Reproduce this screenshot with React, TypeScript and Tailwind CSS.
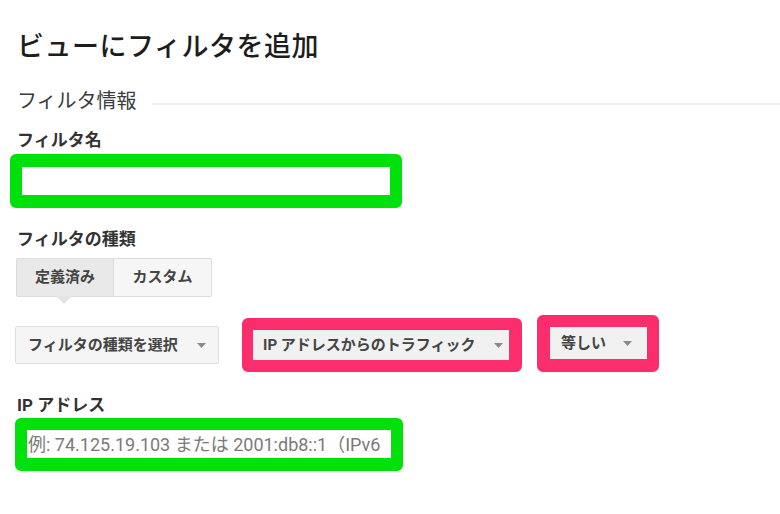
const font = { fontFamily: "Roboto, 'Noto Sans CJK JP', sans-serif" };

function Caret() {
  return (
    <svg className="w-[9px] h-[5px] shrink-0" viewBox="0 0 9 5">
      <path d="M0 0h9L4.5 5z" fill="#8a8a8a" />
    </svg>
  );
}

export default function App() {
  return (
    <div
      className="w-[780px] h-[514px] bg-white overflow-hidden text-[#333] flex flex-col"
      style={font}
    >
      <h1 className="ml-[17px] mt-[31px] text-[27px] leading-[32px] font-medium text-[#1d1d1d] tracking-[0.5px]">
        ビューにフィルタを追加
      </h1>

      <div className="flex items-center mt-[26px]">
        <h2 className="ml-[17px] text-[20px] leading-[24px] text-[#3c3c3c]">フィルタ情報</h2>
        <div className="flex-1 h-[2px] bg-[#efefef] ml-[15px] mt-[6px]" />
      </div>

      <label className="ml-[17px] mt-[17px] text-[17px] leading-[20px] font-bold text-[#333]">
        フィルタ名
      </label>
      <div className="ml-[10px] mt-[4px] w-[392px] border-[#00e00b] border-t-[13px] border-b-[13px] border-x-[12px] rounded-[6px]">
        <div className="h-[28px] bg-white" />
      </div>

      <label className="ml-[17px] mt-[21px] text-[17px] leading-[20px] font-bold text-[#333]">
        フィルタの種類
      </label>
      <div className="ml-[16px] mt-[9px] flex w-[196px] h-[39px] text-[15px] font-bold text-[#444]">
        <div className="relative w-[98px] flex items-center justify-center bg-[#e9e9e9] border border-[#dcdcdc] rounded-l-[2px]">
          定義済み
          <div className="absolute left-[39px] top-full w-0 h-0 border-l-[8px] border-r-[8px] border-t-[8px] border-l-transparent border-r-transparent border-t-[#e4e4e4]" />
        </div>
        <div className="flex-1 flex items-center justify-center bg-[#f6f6f6] border border-l-0 border-[#dcdcdc] rounded-r-[2px]">
          カスタム
        </div>
      </div>

      <div className="flex items-center mt-[21px] text-[15px] font-bold text-[#444]">
        <div className="ml-[15px] w-[204px] h-[38px] flex items-center justify-between pl-[12px] pr-[12px] bg-[#f5f5f5] border border-[#dedede] rounded-[2px]">
          <span>フィルタの種類を選択</span>
          <Caret />
        </div>
        <div className="ml-[23px] w-[280px] border-[#fc2d6c] border-l-[11px] border-r-[13px] border-y-[12px] rounded-[6px]">
          <div className="h-[30px] flex items-center justify-between pl-[10px] pr-[6px] bg-[#f1f1f1]">
            <span>IP アドレスからのトラフィック</span>
            <Caret />
          </div>
        </div>
        <div className="ml-[15px] -mt-[3px] w-[122px] border-[#fc2d6c] border-l-[13px] border-r-[12px] border-t-[12px] border-b-[13px] rounded-[6px]">
          <div className="h-[32px] flex items-center justify-between pl-[11px] pr-[15px] bg-[#f1f1f1]">
            <span>等しい</span>
            <Caret />
          </div>
        </div>
      </div>

      <label className="ml-[17px] mt-[23px] text-[17px] leading-[20px] font-bold text-[#333]">
        IP アドレス
      </label>
      <div className="ml-[15px] mt-[3px] w-[388px] border-[#00e00b] border-t-[12px] border-b-[13px] border-x-[12px] rounded-[6px]">
        <div className="h-[28px] bg-white flex items-center whitespace-nowrap pl-[1px] text-[18px] text-[#7a7a7a]">
          例: 74.125.19.103 または 2001:db8::1（IPv6
        </div>
      </div>
    </div>
  );
}
